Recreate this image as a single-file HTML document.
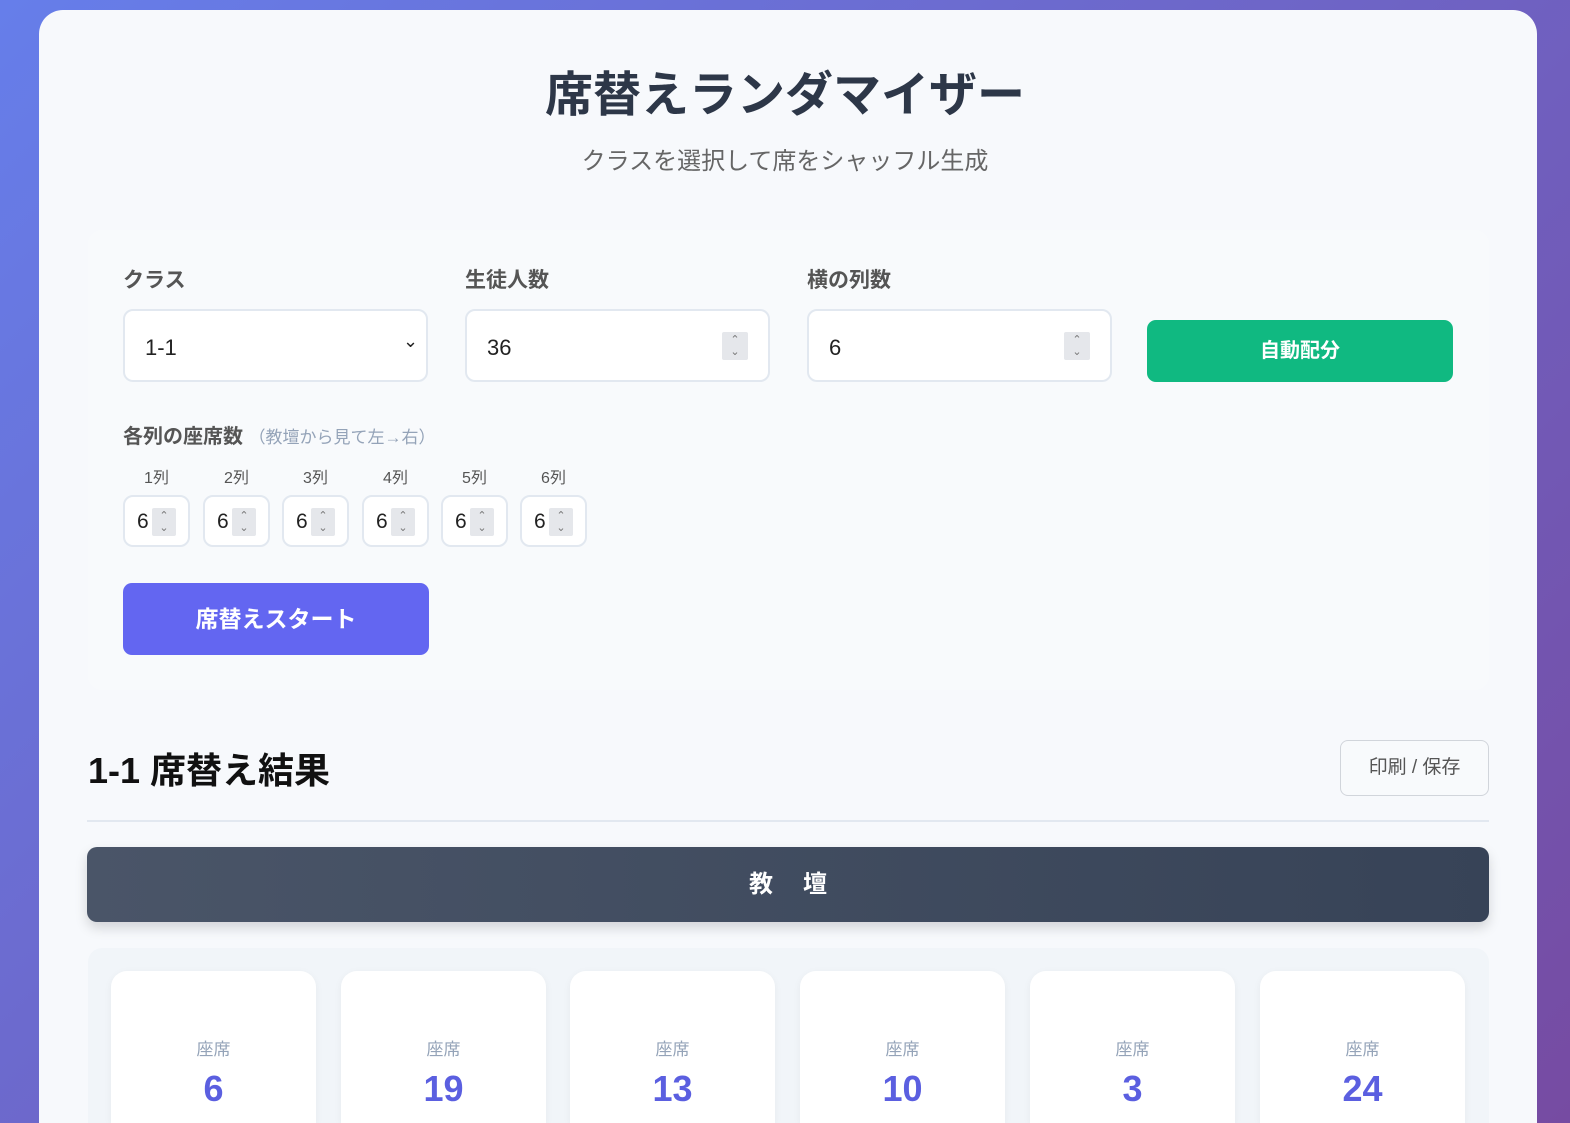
<!DOCTYPE html>
<html style="height:1123px;overflow:hidden"><head><meta charset="utf-8"><style>
*{box-sizing:border-box;margin:0;padding:0}
body{width:1570px;height:1123px;overflow:hidden;background:linear-gradient(135deg,#667eea 0%,#764ba2 100%);font-family:"Liberation Sans","Noto Sans CJK JP",sans-serif;position:relative}
.card{position:absolute;left:39px;top:10px;width:1498px;height:1113px;background:#f7f9fc;border-radius:24px 24px 0 0}
.abs{position:absolute}
h1{position:absolute;left:0;width:1570px;top:55px;text-align:center;font-size:48px;font-weight:700;color:#2d3748}
.sub{position:absolute;left:0;width:1570px;top:141px;text-align:center;font-size:24px;color:#666}
.panel{position:absolute;left:88px;top:230px;width:1401px;height:460px;background:#f8fafc;border-radius:14px}
.lbl{position:absolute;font-size:21px;font-weight:700;color:#555;top:264px}
.inp{position:absolute;top:309px;width:305px;height:73px;border:2px solid #e2e8f0;border-radius:10px;background:#fff;font-size:22px;color:#222;padding:24px 0 0 20px}
.spin{position:absolute;width:26px;height:28px;background:#e5e7eb;border-radius:2px;color:#777;font-size:11px;line-height:12px;text-align:center;padding-top:2px}
.sm{position:absolute;top:495px;width:67px;height:52px;border:2px solid #e2e8f0;border-radius:10px;background:#fff;font-size:21px;padding:13px 0 0 12px;color:#222}
.sm .spin{left:27px;top:11px;height:28px;width:24px}
.cl{position:absolute;top:464px;font-size:16px;color:#555;width:67px;text-align:center}
.seat{position:absolute;top:971px;width:205px;height:152px;background:#fff;border-radius:16px 16px 0 0;box-shadow:0 2px 8px rgba(0,0,0,.05);text-align:center}
.seat .s{margin-top:64px;font-size:17px;color:#94a3b8}
.seat .n{margin-top:8px;font-size:36px;line-height:42px;font-weight:700;color:#5b5fe0}
</style></head><body>
<div class="card"></div>
<h1>席替えランダマイザー</h1>
<div class="sub">クラスを選択して席をシャッフル生成</div>
<div class="panel"></div>
<div class="lbl" style="left:123px">クラス</div>
<div class="lbl" style="left:465px">生徒人数</div>
<div class="lbl" style="left:807px">横の列数</div>
<div class="inp" style="left:123px">1-1<span class="abs" style="left:278px;top:20px;font-size:18px">&#8964;</span></div>
<div class="inp" style="left:465px">36<div class="spin" style="left:255px;top:21px">⌃<br>⌄</div></div>
<div class="inp" style="left:807px">6<div class="spin" style="left:255px;top:21px">⌃<br>⌄</div></div>
<div class="abs" style="left:1147px;top:320px;width:306px;height:62px;background:#10b981;border-radius:9px;color:#fff;font-size:20px;font-weight:700;text-align:center;line-height:62px">自動配分</div>
<div class="abs" style="left:123px;top:420px;font-size:20px;font-weight:700;color:#555">各列の座席数 <span style="font-size:17px;font-weight:400;color:#94a3b8">（教壇から見て左→右）</span></div>
<div class="cl" style="left:123px">1列</div><div class="cl" style="left:203px">2列</div><div class="cl" style="left:282px">3列</div><div class="cl" style="left:362px">4列</div><div class="cl" style="left:441px">5列</div><div class="cl" style="left:520px">6列</div>
<div class="sm" style="left:123px">6<div class="spin">⌃<br>⌄</div></div>
<div class="sm" style="left:203px">6<div class="spin">⌃<br>⌄</div></div>
<div class="sm" style="left:282px">6<div class="spin">⌃<br>⌄</div></div>
<div class="sm" style="left:362px">6<div class="spin">⌃<br>⌄</div></div>
<div class="sm" style="left:441px">6<div class="spin">⌃<br>⌄</div></div>
<div class="sm" style="left:520px">6<div class="spin">⌃<br>⌄</div></div>
<div class="abs" style="left:123px;top:583px;width:306px;height:72px;background:#6366f1;border-radius:9px;color:#fff;font-size:23px;font-weight:700;text-align:center;line-height:72px">席替えスタート</div>
<div class="abs" style="left:88px;top:742px;font-size:36px;font-weight:700;color:#111">1-1 席替え結果</div>
<div class="abs" style="left:1340px;top:740px;width:149px;height:56px;border:1px solid #d1d5db;border-radius:8px;background:#f8fafc;font-size:19px;color:#555;text-align:center;line-height:54px">印刷 / 保存</div>
<div class="abs" style="left:87px;top:820px;width:1402px;height:2px;background:#e2e8f0"></div>
<div class="abs" style="left:87px;top:847px;width:1402px;height:75px;border-radius:10px;background:linear-gradient(90deg,#4a5568,#374357);box-shadow:0 6px 12px rgba(0,0,0,.15);color:#fff;font-size:24px;font-weight:700;text-align:center;line-height:75px;letter-spacing:30px;padding-left:30px">教壇</div>
<div class="abs" style="left:88px;top:948px;width:1401px;height:175px;background:#f1f5f9;border-radius:14px 14px 0 0"></div>
<div class="seat" style="left:111px"><div class="s">座席</div><div class="n">6</div></div>
<div class="seat" style="left:341px"><div class="s">座席</div><div class="n">19</div></div>
<div class="seat" style="left:570px"><div class="s">座席</div><div class="n">13</div></div>
<div class="seat" style="left:800px"><div class="s">座席</div><div class="n">10</div></div>
<div class="seat" style="left:1030px"><div class="s">座席</div><div class="n">3</div></div>
<div class="seat" style="left:1260px"><div class="s">座席</div><div class="n">24</div></div>
</body></html>
